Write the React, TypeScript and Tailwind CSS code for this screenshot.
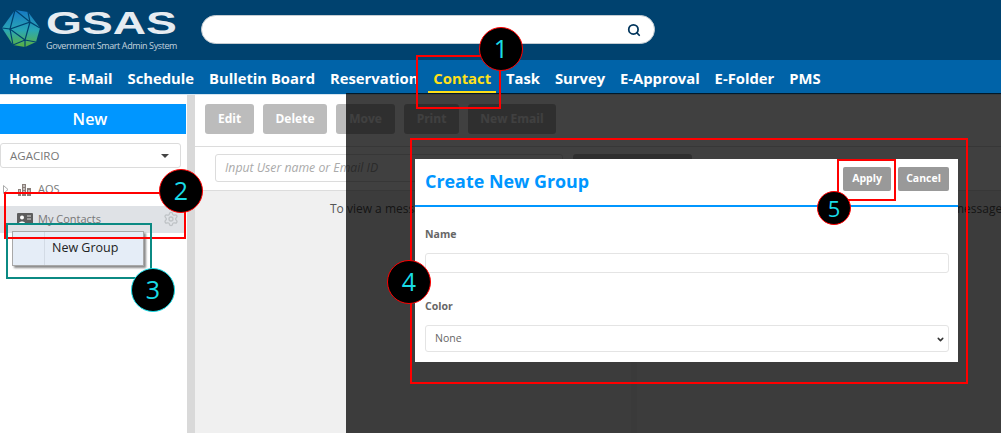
import { Search, ChevronDown, Settings } from "lucide-react";

const NAV_ITEMS = ["Home", "E-Mail", "Schedule", "Bulletin Board", "Reservation", "Contact", "Task", "Survey", "E-Approval", "E-Folder", "PMS"];
const OPEN_SANS = "font-['Open_Sans',sans-serif]";

function Logo() {
  return (
    <div className="flex items-start">
      <svg width="42" height="47" viewBox="0 0 42 47" className="ml-[1px] mt-[9px] shrink-0">
        <defs>
          <linearGradient id="gem" x1="0" y1="0" x2="0" y2="1">
            <stop offset="0" stopColor="#1678c4" />
            <stop offset="0.55" stopColor="#2aa7b5" />
            <stop offset="1" stopColor="#5cb13f" />
          </linearGradient>
        </defs>
        <polygon points="14,1 27,3 39,19 35,33 24,38 12,36 1,19" fill="url(#gem)" />
        <path d="M14 1L9 20L29 13L14 1M27 3L29 13L39 19M29 13L24 31L9 20L1 19M9 20L12 36L24 31L35 33M24 31L24 38" stroke="#00426f" strokeWidth="1.2" fill="none" />
      </svg>
      <div className="ml-[3px] w-[134px]">
        <div className="mt-[7px] origin-left scale-x-[1.49] font-['Liberation_Sans',sans-serif] text-[31px] font-bold leading-[34px] text-[#e6ecf1]">GSAS</div>
        <div className={`${OPEN_SANS} -mt-[1px] whitespace-nowrap text-[9px] leading-[12px] tracking-[-0.4px] text-[#c3d2de]`}>Government Smart Admin System</div>
      </div>
    </div>
  );
}

function Header() {
  return (
    <>
      <div className="flex h-[60px] bg-[#00426f]">
        <Logo />
        <div className="ml-[21px] mt-[15px] flex h-[29px] w-[454px] items-center justify-end rounded-full border border-[#c5ccd2] bg-white pr-[13px]">
          <Search size={14} strokeWidth={3} className="text-[#00355c]" />
        </div>
      </div>
      <nav className={`${OPEN_SANS} flex h-[35px] gap-[14.9px] border-b border-[#d5e5f0] bg-[#0063a8] pl-[9px] pt-[8px] text-[14.8px] font-bold leading-[20px] text-white`}>
        {NAV_ITEMS.map((item) => (
          <span key={item} className={item === "Contact" ? "relative text-[#ffe01a]" : ""}>
            {item}
            {item === "Contact" && <span className="absolute -left-[5px] -right-[5px] top-[23px] h-[2px] bg-[#ffe01a]" />}
          </span>
        ))}
      </nav>
    </>
  );
}

function Sidebar() {
  return (
    <aside className={`${OPEN_SANS} w-[187px] shrink-0 bg-white pt-[9px] text-[11px] text-[#777]`}>
      <div className="flex h-[30px] w-[186px] items-center justify-center bg-[#0096ff] pr-[6px] text-[16px] font-semibold text-white">New</div>
      <div className="mt-[9px] flex h-[25px] w-[181px] items-center justify-between rounded-[3px] border border-[#dcdcdc] pl-[9px] pr-[11px] text-[11.5px]">
        AGACIRO
        <svg width="8" height="4" viewBox="0 0 8 4"><path d="M0 0H8L4 4Z" fill="#444" /></svg>
      </div>
      <div className="mt-[12px] flex h-[18px] items-center">
        <svg width="6" height="9" viewBox="0 0 6 9" className="ml-[3px]"><path d="M0.5 0.5L5 4.5L0.5 8.5Z" fill="#fff" stroke="#aaa" /></svg>
        <svg width="13" height="13" viewBox="0 0 13 13" className="ml-[9px]">
          <path d="M0 6h3v7H0zM4 1h4v12H4zM9 5h4v8H9z" fill="#8a7f7a" />
          <path d="M5 3h2M5 6h2M5 9h2M1 8h1M10 8h2" stroke="#fff" />
        </svg>
        <span className="ml-[7px]">AOS</span>
      </div>
      <div className="mt-[8px] flex h-[27px] w-[186px] items-center bg-[#dfe2e6] pb-[1px]">
        <svg width="16" height="12" viewBox="0 0 16 12" className="ml-[17px]">
          <rect width="16" height="12" rx="1" fill="#5d5d5d" />
          <circle cx="5" cy="4.500" r="2" fill="#fff" />
          <path d="M2 10c.5-2 5.500-2 6 0z" fill="#fff" />
          <path d="M10 3h4M10 6h4" stroke="#ddd" />
        </svg>
        <span className="ml-[5px]">My Contacts</span>
        <Settings size={16} strokeWidth={2} className="ml-auto mr-[7px] text-[#bfc3c6]" />
      </div>
    </aside>
  );
}

function ToolButton({ label, width }: { label: string; width: string }) {
  return <div className={`${width} flex h-[30px] items-center justify-center rounded-[3px] bg-[#bcbcbc] text-[12px] font-bold text-white`}>{label}</div>;
}

function Main() {
  return (
    <main className={`${OPEN_SANS} min-w-0 flex-1 bg-[#f0f0f0] text-[#555]`}>
      <div className="flex h-[52px] gap-[9px] border-b border-[#dcdcdc] bg-white pl-[10px] pt-[9px]">
        <ToolButton label="Edit" width="w-[49px]" />
        <ToolButton label="Delete" width="w-[64px]" />
        <ToolButton label="Move" width="w-[59px]" />
        <ToolButton label="Print" width="w-[55px]" />
        <ToolButton label="New Email" width="w-[88px]" />
      </div>
      <div className="flex h-[44px] border-b border-[#dcdcdc] bg-white pl-[20px] pt-[7px]">
        <div className="flex h-[28px] w-[348px] items-center rounded-[3px] border border-[#dcdcdc] pl-[9px] text-[12.25px] italic text-[#aaa]">Input User name or Email ID</div>
        <div className="ml-[10px] h-[28px] w-[119px] rounded-[3px] bg-[#bcbcbc]" />
      </div>
      <div className="flex">
        <div className="h-[242px] w-[442px] shrink-0 whitespace-nowrap border-r-[6px] border-[#e8e8e8] pl-[135px] pt-[9px] text-[12px]">To view a message, select it from the list.</div>
        <div className="whitespace-nowrap pl-[316px] pt-[9px] text-[12px]">message</div>
      </div>
    </main>
  );
}

function Modal() {
  return (
    <div className={`${OPEN_SANS} absolute left-[415px] top-[159px] h-[203px] w-[543px] bg-white text-[#666]`}>
      <div className="flex h-[48px] items-start justify-between border-b-2 border-[#0096ff] pl-[10px] pr-[9px]">
        <h2 className="mt-[8px] text-[17.9px] font-bold leading-[28px] text-[#0096ff]">Create New Group</h2>
        <div className="mt-[8px] flex gap-[7px] text-[10.5px] font-bold text-white">
          <div className="flex h-[24px] w-[48px] items-center justify-center rounded-[2px] bg-[#999]">Apply</div>
          <div className="flex h-[24px] w-[51px] items-center justify-center rounded-[2px] bg-[#999]">Cancel</div>
        </div>
      </div>
      <div className="pl-[10px] pr-[9px]">
        <div className="mt-[20px] text-[10.5px] font-bold leading-[14px]">Name</div>
        <div className="mt-[12px] h-[20px] rounded-[3px] border border-[#e4e4e4]" />
        <div className="mt-[26px] text-[10.5px] font-bold leading-[14px]">Color</div>
        <div className="mt-[12px] flex h-[27px] items-center justify-between rounded-[3px] border border-[#e4e4e4] pl-[9px] pr-[3px] pt-[1px] text-[10.5px]">
          None
          <ChevronDown size={9} strokeWidth={4} className="text-[#333]" />
        </div>
      </div>
    </div>
  );
}

function Marker({ n, className }: { n: number; className: string }) {
  return (
    <div className={`absolute flex items-center justify-center rounded-full border bg-black font-['Open_Sans',sans-serif] text-[#19dbe6] ${className}`}>{n}</div>
  );
}

export default function App() {
  return (
    <div className="relative h-[433px] w-[1001px] overflow-hidden bg-white">
      <Header />
      <div className="flex h-[338px]">
        <Sidebar />
        <div className="w-[8px] shrink-0 bg-[#d9d9d9]" />
        <Main />
      </div>

      {/* context menu */}
      <div className="absolute left-[12px] top-[231px] flex h-[35px] w-[132px] border border-[#a8a8a8] bg-[#e5edf7] shadow-[2px_2px_2px_#8a8a8a]">
        <div className="w-[32px] border-r border-[#d3dbe5]" />
        <span className="ml-[7px] pt-[7px] font-['Open_Sans',sans-serif] text-[12.5px] leading-[18px] text-[#222]">New Group</span>
      </div>

      {/* dim layer */}
      <div className="absolute bottom-0 left-[346px] right-0 top-[93px] bg-black/75" />
      <Modal />

      {/* annotations */}
      <div className="absolute left-[416px] top-[55px] h-[54px] w-[85px] border-2 border-[#f00]" />
      <div className="absolute left-[4px] top-[192px] h-[47px] w-[182px] border-2 border-[#f00]" />
      <div className="absolute left-[6px] top-[223px] h-[56px] w-[146px] border-2 border-[#0b8a83]" />
      <div className="absolute left-[410px] top-[138px] h-[246px] w-[558px] border-2 border-[#f00]" />
      <div className="absolute left-[837px] top-[159px] h-[42px] w-[59px] border-2 border-[#f00]" />
      <Marker n={1} className="left-[479px] top-[27px] h-[44px] w-[44px] border-[#f00] text-[25px]" />
      <Marker n={2} className="left-[159px] top-[169px] h-[44px] w-[44px] border-[#f00] text-[25px]" />
      <Marker n={3} className="left-[131px] top-[268px] h-[44px] w-[44px] border-[#19dbe6] text-[25px]" />
      <Marker n={4} className="left-[387px] top-[260px] h-[44px] w-[44px] border-[#f00] text-[25px]" />
      <Marker n={5} className="left-[817px] top-[191px] h-[34px] w-[34px] border-[#f00] text-[22px]" />
    </div>
  );
}
